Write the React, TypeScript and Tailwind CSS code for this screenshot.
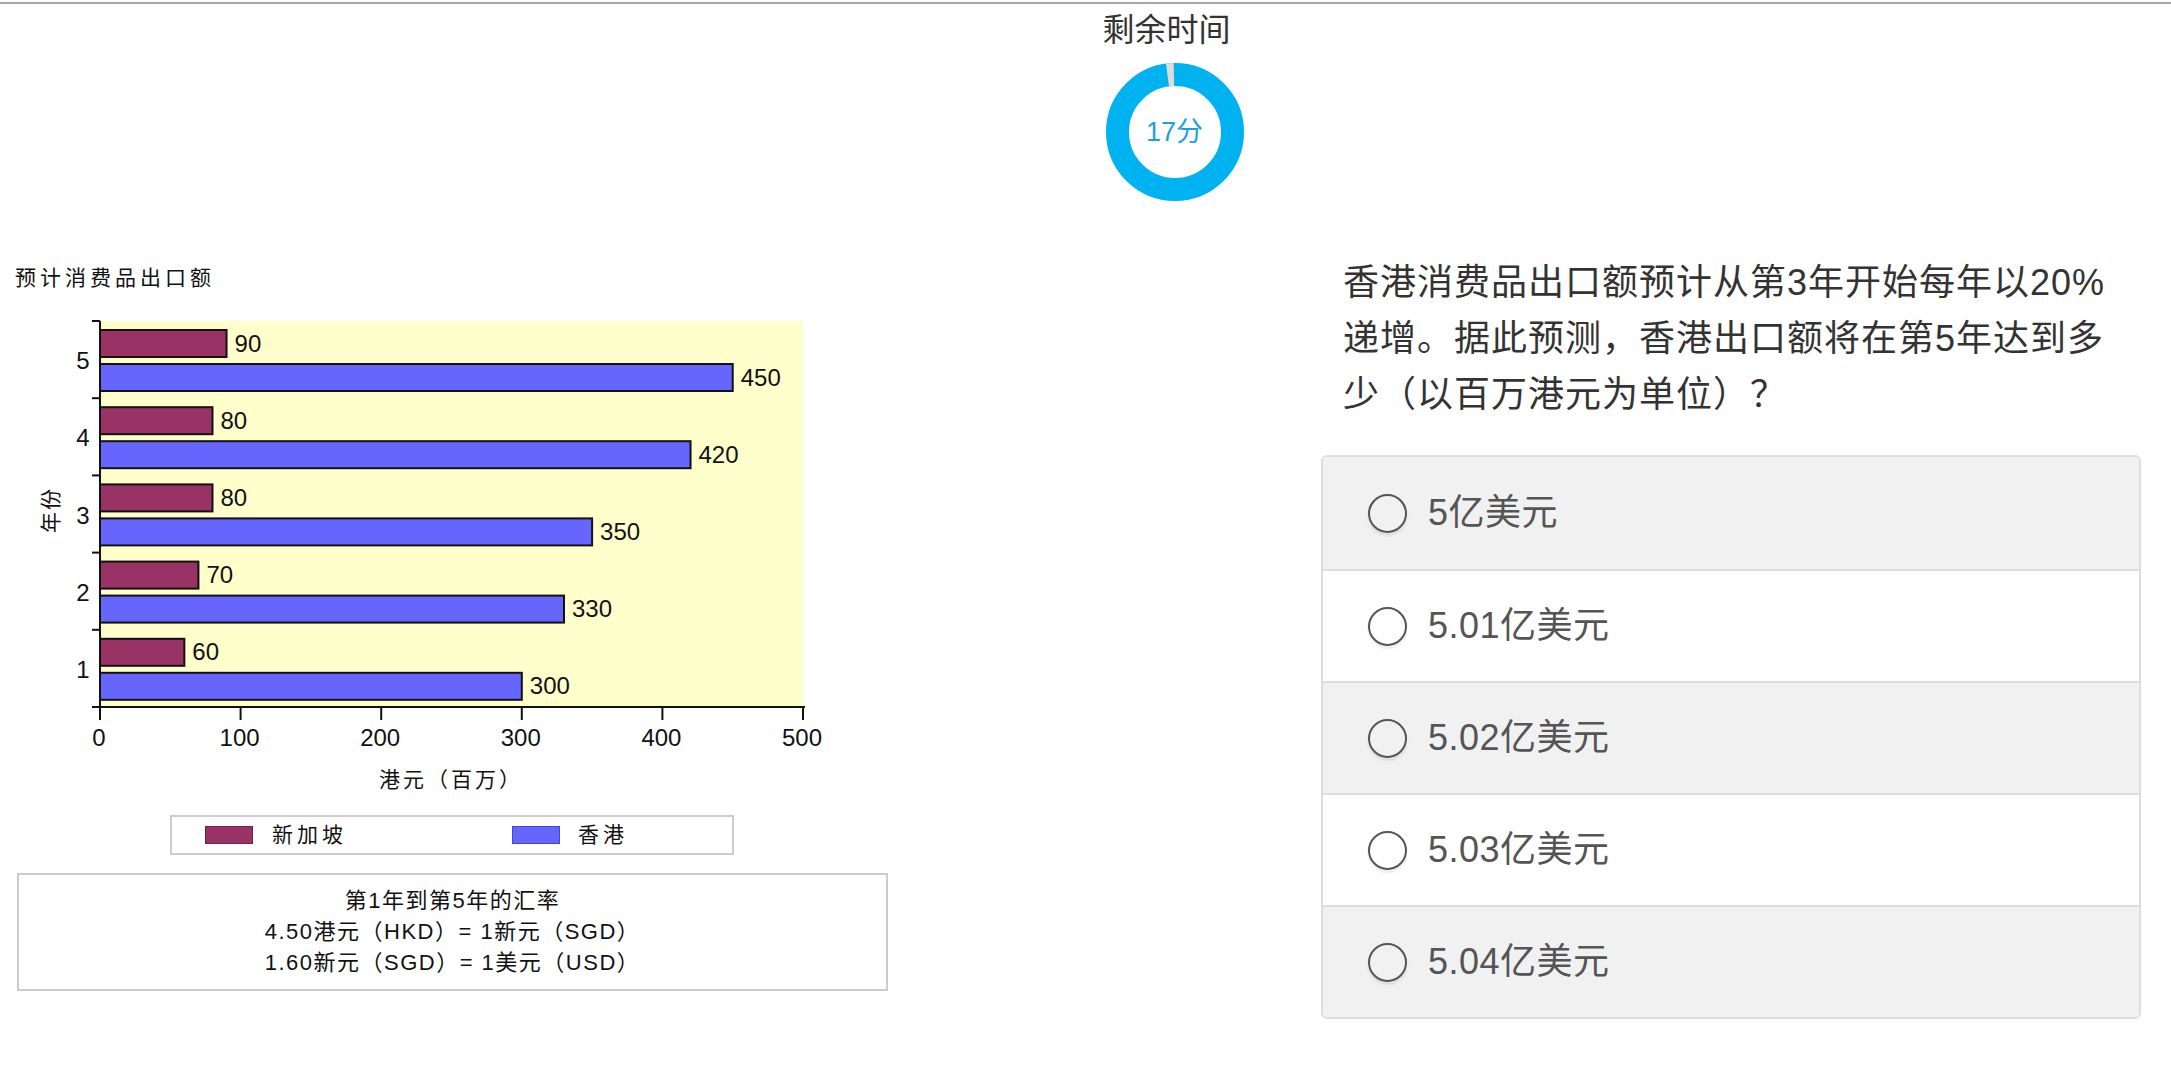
import React from 'react';

const years = [
  { year: 5, sg: 90, hk: 450 },
  { year: 4, sg: 80, hk: 420 },
  { year: 3, sg: 80, hk: 350 },
  { year: 2, sg: 70, hk: 330 },
  { year: 1, sg: 60, hk: 300 },
];

const options = ['5亿美元', '5.01亿美元', '5.02亿美元', '5.03亿美元', '5.04亿美元'];

// chart geometry (svg local coords)
const X0 = 85;
const Y0 = 28;
const PLOT_W = 703;
const PLOT_H = 386;
const GH = PLOT_H / 5;
const PX = PLOT_W / 500;

const cjk = "font-['Liberation_Sans','Noto_Sans_CJK_SC',sans-serif]";

function Donut() {
  const r = 57.5;
  const c = 2 * Math.PI * r;
  return (
    <div className="relative ml-[8px] mt-[9px] h-[138px] w-[138px]">
      <svg width={138} height={138} className="block">
        <circle cx={69} cy={69} r={r} fill="none" stroke="#00b2ef" strokeWidth={23} />
        <circle
          cx={69}
          cy={69}
          r={r}
          fill="none"
          stroke="#dcdcdc"
          strokeWidth={23}
          strokeDasharray={`6.5 ${c}`}
          transform="rotate(-97.5 69 69)"
        />
      </svg>
      <div className={`absolute inset-0 flex items-center justify-center text-[27px] text-[#1ea1d9] ${cjk}`}>
        17分
      </div>
    </div>
  );
}

function BarChart() {
  return (
    <svg width={830} height={507} className="block font-['Liberation_Sans',sans-serif]">
      <rect x={X0} y={Y0} width={PLOT_W} height={PLOT_H} fill="#ffffcc" />
      {years.map((d, i) => {
        const top = Y0 + i * GH;
        const sgW = d.sg * PX;
        const hkW = d.hk * PX;
        return (
          <g key={d.year}>
            <rect x={X0} y={top + 9} width={sgW} height={27} fill="#993366" stroke="#111" strokeWidth={2} />
            <text x={X0 + sgW + 8} y={top + 22} dominantBaseline="central" fontSize={24} fill="#111">
              {d.sg}
            </text>
            <rect x={X0} y={top + 43} width={hkW} height={27} fill="#6666ff" stroke="#111" strokeWidth={2} />
            <text x={X0 + hkW + 8} y={top + 56} dominantBaseline="central" fontSize={24} fill="#111">
              {d.hk}
            </text>
            <text x={68} y={top + GH / 2 + 1} textAnchor="middle" dominantBaseline="central" fontSize={24} fill="#111">
              {d.year}
            </text>
          </g>
        );
      })}
      {/* y axis */}
      <line x1={X0} y1={Y0} x2={X0} y2={Y0 + PLOT_H} stroke="#111" strokeWidth={2} />
      {[0, 1, 2, 3, 4, 5].map((i) => (
        <line key={i} x1={X0 - 8} y1={Y0 + i * GH} x2={X0} y2={Y0 + i * GH} stroke="#111" strokeWidth={2} />
      ))}
      {/* x axis */}
      <line x1={X0 - 8} y1={Y0 + PLOT_H} x2={X0 + PLOT_W + 2} y2={Y0 + PLOT_H} stroke="#111" strokeWidth={2} />
      {[0, 1, 2, 3, 4, 5].map((k) => (
        <g key={k}>
          <line
            x1={X0 + k * 100 * PX}
            y1={Y0 + PLOT_H}
            x2={X0 + k * 100 * PX}
            y2={Y0 + PLOT_H + 13}
            stroke="#111"
            strokeWidth={2}
          />
          <text
            x={X0 + k * 100 * PX - 1}
            y={444}
            textAnchor="middle"
            dominantBaseline="central"
            fontSize={24}
            fill="#111"
          >
            {k * 100}
          </text>
        </g>
      ))}
      <text
        x={436}
        y={485}
        textAnchor="middle"
        dominantBaseline="central"
        fontSize={21}
        letterSpacing={3}
        fill="#111"
        className="font-['Noto_Sans_CJK_SC',sans-serif]"
      >
        港元（百万）
      </text>
      <text
        x={34}
        y={217}
        transform="rotate(-90 34 217)"
        textAnchor="middle"
        dominantBaseline="central"
        fontSize={21}
        letterSpacing={2}
        fill="#111"
        className="font-['Noto_Sans_CJK_SC',sans-serif]"
      >
        年份
      </text>
    </svg>
  );
}

function LeftColumn() {
  return (
    <div className={`w-[875px] text-[#111] ${cjk}`}>
      <div className="mt-[13px] text-[21px] leading-[30px] tracking-[4px]">预计消费品出口额</div>
      <BarChart />
      <div className="ml-[155px] mt-[15px] flex h-[40px] w-[564px] items-center border-2 border-[#cccccc] pl-[33px] text-[21px] tracking-[4px]">
        <div className="flex w-[307px] items-center gap-[19px]">
          <span className="h-[18px] w-[48px] border border-[#6b2247] bg-[#993366]" />
          <span>新加坡</span>
        </div>
        <div className="flex items-center gap-[18px]">
          <span className="h-[18px] w-[48px] border border-[#4444cc] bg-[#6666ff]" />
          <span>香港</span>
        </div>
      </div>
      <div className="ml-[2px] mt-[18px] h-[118px] w-[871px] border-2 border-[#cccccc] pt-[10px] text-center text-[22px] leading-[31px] tracking-[1.5px]">
        <div>第1年到第5年的汇率</div>
        <div>4.50港元（HKD）= 1新元（SGD）</div>
        <div>1.60新元（SGD）= 1美元（USD）</div>
      </div>
    </div>
  );
}

function RightColumn() {
  return (
    <div className={`w-[820px] ${cjk}`}>
      <p className="mt-[5px] pl-[22px] pr-[24px] text-[36px] leading-[56px] tracking-[1px] text-[#333333]">
        香港消费品出口额预计从第3年开始每年以20%递增。据此预测，香港出口额将在第5年达到多少（以百万港元为单位）？
      </p>
      <div className="mt-[32px] overflow-hidden rounded-[6px] border-2 border-[#dddddd]">
        {options.map((opt, i) => (
          <div
            key={opt}
            className={`flex h-[112px] items-center gap-[21px] pl-[45px] ${i > 0 ? 'border-t-2 border-[#dddddd]' : ''} ${
              i % 2 === 0 ? 'bg-[#f1f1f1]' : 'bg-white'
            }`}
          >
            <span className="h-[39px] w-[39px] rounded-full border-2 border-[#555555] shadow-[0_3px_3px_rgba(0,0,0,0.08)]" />
            <span className="text-[36px] leading-none tracking-[0.5px] text-[#555555]">{opt}</span>
          </div>
        ))}
      </div>
    </div>
  );
}

export default function App() {
  return (
    <div className="min-h-screen w-full bg-white pb-[60px] text-[#333333]">
      <div className="mt-[2px] h-[2px] bg-[#a6a6a6]" />
      <div className="flex flex-col items-center pl-[170px]">
        <div className={`mr-[8px] mt-[2px] text-[32px] leading-[48px] text-[#333333] ${cjk}`}>剩余时间</div>
        <Donut />
      </div>
      <div className="mt-[49px] flex items-start justify-between pl-[15px] pr-[30px]">
        <LeftColumn />
        <RightColumn />
      </div>
    </div>
  );
}
